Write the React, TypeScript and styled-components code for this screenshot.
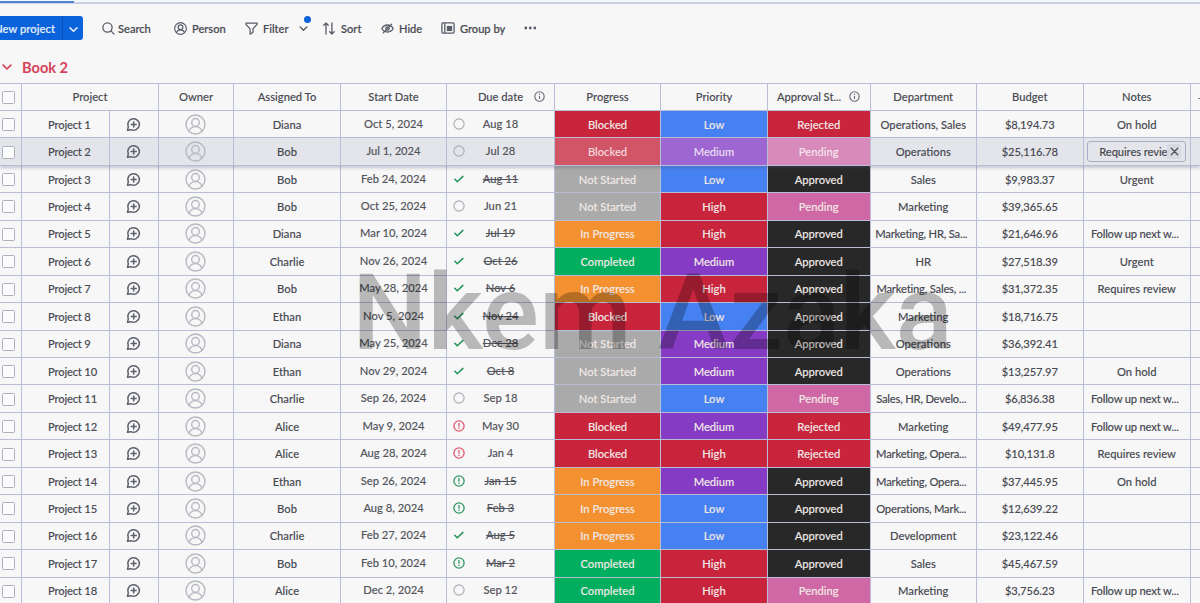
import React from 'react';
import styled, { createGlobalStyle } from 'styled-components';

const GlobalStyle = createGlobalStyle`
  * { box-sizing: border-box; }
  html, body { margin: 0; padding: 0; overflow: hidden; }
  body {
    background: #f7f7f7;
    color: #484a52;
    font-family: Lato, "Open Sans", sans-serif;
    font-size: 11.2px;
    font-weight: 500;
  }
`;

const LINE = '#b9bdd8';

const Page = styled.div`
  position: relative;
  width: 1200px;
  height: 603px;
  overflow: hidden;
  display: flex;
  flex-direction: column;
`;

const TabStrip = styled.div`
  height: 4px;
  flex: none;
  background: #f3f6fd;
  border-bottom: 2px solid #cdd1e3;
`;

const ActiveTab = styled.div`
  width: 74px;
  height: 3px;
  background: linear-gradient(#f3f6fd 0 1px, #4d86d3 1px);
`;

const Toolbar = styled.div`
  display: flex;
  flex: none;
  height: 48px;
  align-items: center;
  font-size: 11.1px;
  -webkit-text-stroke: 0.2px currentColor;
`;

const NewButton = styled.div`
  display: flex;
  width: 83px;
  height: 24px;
  margin-right: 19px;
  border-radius: 0 3px 3px 0;
  background: #0a63da;
  color: #e6effb;
  overflow: hidden;
`;

const NewLabel = styled.div`
  display: flex;
  width: 63px;
  align-items: center;
  justify-content: flex-end;
  padding-right: 7px;
  border-right: 1px solid #0853b8;
  white-space: nowrap;
  letter-spacing: 0.1px;
`;

const NewCaret = styled.div`
  display: flex;
  flex: 1;
  align-items: center;
  justify-content: center;
  padding-top: 2px;
`;

const Tool = styled.div<{ $width: number; $gap: number }>`
  position: relative;
  display: flex;
  width: ${p => p.$width}px;
  gap: ${p => p.$gap}px;
  align-items: center;
  white-space: nowrap;
  svg { flex: none; }
`;

const FilterDot = styled.span`
  position: absolute;
  top: -6px;
  left: 59px;
  width: 7px;
  height: 7px;
  border-radius: 50%;
  background: #0b63d6;
`;

const FilterCaret = styled.span`
  display: flex;
  margin-left: 5px;
`;

const GroupTitle = styled.div`
  display: flex;
  flex: none;
  height: 31px;
  align-items: center;
  padding: 0 0 1px 2px;
  gap: 10px;
  color: #d6435a;
  font-size: 14.6px;
  font-weight: 700;
`;

const Table = styled.div`
  flex: none;
  border-top: 1px solid ${LINE};
  -webkit-text-stroke: 0.1px currentColor;
`;

const Row = styled.div<{ $head?: boolean; $hover?: boolean }>`
  position: relative;
  z-index: ${p => (p.$hover ? 1 : 0)};
  display: grid;
  grid-template-columns: ${p =>
    p.$head
      ? '22px 137px 75px 107px 106px 108px 106px 107px 102.5px 106.5px 106.5px 107.5px 1fr'
      : '22px 88px 49px 75px 107px 106px 108px 106px 107px 102.5px 106.5px 106.5px 107.5px 1fr'};
  height: ${p => (p.$head ? 26.9 : 27.46)}px;
  background: ${p => (p.$hover ? '#e4e5ea' : 'transparent')};
  box-shadow: ${p => (p.$hover ? '0 2px 3px rgba(80, 86, 120, 0.3)' : 'none')};
`;

const Cell = styled.div<{ $lift?: boolean; $clipped?: boolean }>`
  display: flex;
  align-items: center;
  justify-content: center;
  min-width: 0;
  padding-bottom: ${p => (p.$lift ? 2 : 0)}px;
  padding-right: ${p => (p.$clipped ? 4 : 0)}px;
  letter-spacing: ${p => (p.$clipped ? -0.2 : 0)}px;
  border-right: 1px solid ${LINE};
  border-bottom: 1px solid ${LINE};
  white-space: nowrap;
`;

const HeadCell = styled(Cell)`
  padding-top: 0;
`;

const AvatarCell = styled(Cell)`
  padding-right: 2px;
`;

const BudgetCell = styled(Cell)`
  font-size: 11.2px;
  letter-spacing: -0.1px;
`;

const CheckCell = styled(Cell)`
  justify-content: flex-start;
  padding: 1px 0 0 2px;
`;

const NameCell = styled(Cell)`
  justify-content: flex-start;
  padding-left: 26px;
  letter-spacing: -0.18px;
`;

const StatusCell = styled(Cell)<{ $fill: string; $dim: boolean }>`
  background: ${p => p.$fill};
  color: ${p => (p.$dim ? 'rgba(255,255,255,0.78)' : '#f1e9e6')};
`;

const SplitCell = styled(Cell)<{ $head?: boolean }>`
  display: grid;
  grid-template-columns: 23px 61px 16px;
  justify-items: center;
  justify-content: start;
  padding-bottom: ${p => (p.$head ? 0 : 1)}px;
`;

const DateText = styled.span<{ $struck?: boolean }>`
  text-decoration: ${p => (p.$struck ? 'line-through' : 'none')};
  color: #53555c;
`;

const DueText = styled(DateText)`
  padding-bottom: 1px;
`;

const ApprovalHead = styled(HeadCell)`
  justify-content: flex-start;
  padding-left: 9px;
  gap: 8px;
  letter-spacing: -0.05px;
`;

const EndCell = styled.div`
  border-bottom: 1px solid ${LINE};
  color: #5d6070;
  padding: 7px 0 0 7px;
`;

const Box = styled.span`
  width: 13px;
  height: 13px;
  border: 1px solid #adb0c0;
  border-radius: 1.5px;
  background: #fbfbfc;
`;

const NoteChip = styled.div`
  position: relative;
  display: flex;
  align-items: center;
  width: 99px;
  height: 21px;
  padding-left: 11px;
  border: 1px solid #a9adc6;
  border-radius: 3px;
  overflow: hidden;
  letter-spacing: -0.1px;
`;

const ChipClose = styled.span`
  position: absolute;
  right: 4px;
  top: 2px;
  display: flex;
  width: 14px;
  height: 15px;
  align-items: center;
  justify-content: center;
  border-radius: 2px;
  background: #d8dae2;
`;

const Watermark = styled.div`
  position: absolute;
  z-index: 5;
  left: 352px;
  top: 253px;
  color: #000;
  opacity: 0.25;
  font-family: Roboto, "Liberation Sans", sans-serif;
  font-size: 106.4px;
  font-weight: 500;
  line-height: 120px;
  white-space: nowrap;
  pointer-events: none;
`;

const Chevron = ({ color = '#50535e', size = 9, width = 1.5 }: { color?: string; size?: number; width?: number }) => (
  <svg width={size} height={size} viewBox="0 0 10 10" fill="none" stroke={color} strokeWidth={width} strokeLinecap="round" strokeLinejoin="round">
    <path d="M1.2 3.2 5 7l3.8-3.8" />
  </svg>
);

const PersonGlyph = ({ size, color, width }: { size: number; color: string; width: number }) => (
  <svg width={size} height={size} viewBox="0 0 22 22" fill="none" stroke={color} strokeWidth={width}>
    <circle cx="11" cy="11" r="9.9" />
    <circle cx="11" cy="8.8" r="4" />
    <path d="M4.2 18c1.2-3.2 3.6-4.8 6.8-4.8s5.600 1.600 6.800 4.800" />
  </svg>
);

const SearchGlyph = () => (
  <svg width="13" height="13" viewBox="0 0 13 13" fill="none" stroke="#5a5d68" strokeWidth="1.3" strokeLinecap="round">
    <circle cx="5.5" cy="5.5" r="4.6" />
    <path d="m8.900 8.900 3.200 3.200" />
  </svg>
);

const FilterGlyph = () => (
  <svg width="13" height="13" viewBox="0 0 13 13" fill="none" stroke="#5a5d68" strokeWidth="1.25" strokeLinejoin="round">
    <path d="M.9 1h11.200v1.300L8 6.900v3.300l-2.900 2V6.900L.9 2.300z" />
  </svg>
);

const SortGlyph = () => (
  <svg width="12" height="13" viewBox="0 0 12 13" fill="none" stroke="#5a5d68" strokeWidth="1.3" strokeLinecap="round" strokeLinejoin="round">
    <path d="M3 12V1M.8 3.200 3 1l2.200 2.200M8.900 1v11M6.700 9.800 8.900 12l2.200-2.200" />
  </svg>
);

const HideGlyph = () => (
  <svg width="13" height="11" viewBox="0 0 13 11" fill="none" stroke="#5a5d68" strokeWidth="1.3" strokeLinecap="round">
    <path d="M.8 5.500C2 3.300 4 2 6.500 2s4.500 1.300 5.700 3.500C11 7.700 9 9 6.500 9S2 7.700.8 5.500z" />
    <circle cx="6.500" cy="5.500" r="1.700" />
    <path d="M2.300 9.900 10.700 1.100" />
  </svg>
);

const GroupGlyph = () => (
  <svg width="14" height="12" viewBox="0 0 14 12" fill="none" stroke="#5a5d68" strokeWidth="1.300">
    <rect x=".9" y=".9" width="12.200" height="10.200" rx="1" />
    <path d="M3.800 1v10" />
    <rect x="6.500" y="4.600" width="4" height="3.800" fill="#5a5d68" />
  </svg>
);

const ChatGlyph = () => (
  <svg width="15" height="15" viewBox="0 0 15 15" fill="none" stroke="#5d606c" strokeWidth="1.500" strokeLinecap="round" strokeLinejoin="round">
    <path d="M2.300 9.900A5.800 5.800 0 1 1 5 12.700L1.500 13.300z" />
    <path d="M7.700 4.900v5M5.200 7.400h5" />
  </svg>
);

const InfoGlyph = () => (
  <svg width="11" height="11" viewBox="0 0 11 11" fill="none" stroke="#696c78" strokeWidth="1.100">
    <circle cx="5.500" cy="5.500" r="4.700" />
    <path d="M5.500 4.900v3M5.500 2.800v1.100" />
  </svg>
);

type Mark = 'open' | 'done' | 'late' | 'lateDone';

const DueMark = ({ kind }: { kind: Mark }) => {
  if (kind === 'done') {
    return (
      <svg width="12" height="12" viewBox="0 0 12 12" fill="none" stroke="#23935a" strokeWidth="1.500" strokeLinecap="round" strokeLinejoin="round">
        <path d="m1.800 6.300 2.500 2.500 5.600-5.400" />
      </svg>
    );
  }
  const color = kind === 'open' ? '#a9abb5' : kind === 'late' ? '#e0586a' : '#2f9862';
  return (
    <svg width="12" height="12" viewBox="0 0 12 12" fill="none" stroke={color} strokeWidth={kind === 'open' ? 1.1 : 1.3}>
      <circle cx="6" cy="6" r="5.100" />
      {kind !== 'open' && <path d="M6 3v3.700M6 7.700V9" />}
    </svg>
  );
};

const FILLS: Record<string, [string, string]> = {
  Blocked: ['#c8253d', '#d25467'],
  'Not Started': ['#aaaaaa', '#bbbbbb'],
  'In Progress': ['#f39130', '#f5a95c'],
  Completed: ['#02af5f', '#3cc083'],
  Low: ['#4681f2', '#6b9af4'],
  Medium: ['#853bc3', '#9e66d0'],
  High: ['#c8253d', '#d25467'],
  Rejected: ['#c8253d', '#d25467'],
  Pending: ['#cf68a4', '#d88bba'],
  Approved: ['#282828', '#545454'],
};

type Item = [string, string, Mark, string, string, string, string, string, string, string];

const ITEMS: Item[] = [
  ['Diana', 'Oct 5, 2024', 'open', 'Aug 18', 'Blocked', 'Low', 'Rejected', 'Operations, Sales', '$8,194.73', 'On hold'],
  ['Bob', 'Jul 1, 2024', 'open', 'Jul 28', 'Blocked', 'Medium', 'Pending', 'Operations', '$25,116.78', 'Requires review'],
  ['Bob', 'Feb 24, 2024', 'done', 'Aug 11', 'Not Started', 'Low', 'Approved', 'Sales', '$9,983.37', 'Urgent'],
  ['Bob', 'Oct 25, 2024', 'open', 'Jun 21', 'Not Started', 'High', 'Pending', 'Marketing', '$39,365.65', ''],
  ['Diana', 'Mar 10, 2024', 'done', 'Jul 19', 'In Progress', 'High', 'Approved', 'Marketing, HR, Sa...', '$21,646.96', 'Follow up next w...'],
  ['Charlie', 'Nov 26, 2024', 'done', 'Oct 26', 'Completed', 'Medium', 'Approved', 'HR', '$27,518.39', 'Urgent'],
  ['Bob', 'May 28, 2024', 'done', 'Nov 6', 'In Progress', 'High', 'Approved', 'Marketing, Sales, ...', '$31,372.35', 'Requires review'],
  ['Ethan', 'Nov 5, 2024', 'done', 'Nov 24', 'Blocked', 'Low', 'Approved', 'Marketing', '$18,716.75', ''],
  ['Diana', 'May 25, 2024', 'done', 'Dec 28', 'Not Started', 'Medium', 'Approved', 'Operations', '$36,392.41', ''],
  ['Ethan', 'Nov 29, 2024', 'done', 'Oct 8', 'Not Started', 'Medium', 'Approved', 'Operations', '$13,257.97', 'On hold'],
  ['Charlie', 'Sep 26, 2024', 'open', 'Sep 18', 'Not Started', 'Low', 'Pending', 'Sales, HR, Develo...', '$6,836.38', 'Follow up next w...'],
  ['Alice', 'May 9, 2024', 'late', 'May 30', 'Blocked', 'Medium', 'Rejected', 'Marketing', '$49,477.95', 'Follow up next w...'],
  ['Alice', 'Aug 28, 2024', 'late', 'Jan 4', 'Blocked', 'High', 'Rejected', 'Marketing, Opera...', '$10,131.8', 'Requires review'],
  ['Ethan', 'Sep 26, 2024', 'lateDone', 'Jan 15', 'In Progress', 'Medium', 'Approved', 'Marketing, Opera...', '$37,445.95', 'On hold'],
  ['Bob', 'Aug 8, 2024', 'lateDone', 'Feb 3', 'In Progress', 'Low', 'Approved', 'Operations, Mark...', '$12,639.22', ''],
  ['Charlie', 'Feb 27, 2024', 'done', 'Aug 5', 'In Progress', 'Low', 'Approved', 'Development', '$23,122.46', ''],
  ['Bob', 'Feb 10, 2024', 'lateDone', 'Mar 2', 'Completed', 'High', 'Approved', 'Sales', '$45,467.59', ''],
  ['Alice', 'Dec 2, 2024', 'open', 'Sep 12', 'Completed', 'High', 'Pending', 'Marketing', '$3,756.23', 'Follow up next w...'],
];

const isClipped = (text: string) => text.endsWith('...');

const ItemRow = ({ item, index }: { item: Item; index: number }) => {
  const [person, start, mark, due, progress, priority, approval, department, budget, note] = item;
  const hover = index === 1;
  const struck = mark === 'done' || mark === 'lateDone';
  return (
    <Row $hover={hover}>
      <CheckCell><Box /></CheckCell>
      <NameCell>{`Project ${index + 1}`}</NameCell>
      <AvatarCell><ChatGlyph /></AvatarCell>
      <AvatarCell><PersonGlyph size={21} color="#b8bac2" width={1.5} /></AvatarCell>
      <Cell>{person}</Cell>
      <Cell $lift><DateText>{start}</DateText></Cell>
      <SplitCell>
        <DueMark kind={mark} />
        <DueText $struck={struck}>{due}</DueText>
      </SplitCell>
      {[progress, priority, approval].map(value => (
        <StatusCell key={value} $fill={FILLS[value][hover ? 1 : 0]} $dim={hover}>{value}</StatusCell>
      ))}
      <Cell $clipped={isClipped(department)}>{department}</Cell>
      <BudgetCell>{budget}</BudgetCell>
      <Cell $clipped={isClipped(note)}>
        {hover ? (
          <NoteChip>
            {note}
            <ChipClose>
              <svg width="9" height="9" viewBox="0 0 9 9" stroke="#4c4f5a" strokeWidth="1.300" strokeLinecap="round">
                <path d="m1.300 1.300 6.400 6.400M7.700 1.300 1.300 7.700" />
              </svg>
            </ChipClose>
          </NoteChip>
        ) : note}
      </Cell>
      <EndCell />
    </Row>
  );
};

export default function App() {
  return (
    <>
      <GlobalStyle />
      <Page>
        <TabStrip><ActiveTab /></TabStrip>
        <Toolbar>
          <NewButton>
            <NewLabel>New project</NewLabel>
            <NewCaret><Chevron color="#e6effb" width={1.7} /></NewCaret>
          </NewButton>
          <Tool $width={72} $gap={3}><SearchGlyph />Search</Tool>
          <Tool $width={71} $gap={5}><PersonGlyph size={13} color="#5a5d68" width={2} />Person</Tool>
          <Tool $width={78} $gap={5}>
            <FilterGlyph />Filter
            <FilterCaret><Chevron /></FilterCaret>
            <FilterDot />
          </Tool>
          <Tool $width={58} $gap={6}><SortGlyph />Sort</Tool>
          <Tool $width={60} $gap={5}><HideGlyph />Hide</Tool>
          <Tool $width={83} $gap={5}><GroupGlyph />Group by</Tool>
          <Tool $width={14} $gap={0}>
            <svg width="13" height="4" viewBox="0 0 13 4" fill="#5a5d68">
              <circle cx="1.800" cy="2" r="1.400" />
              <circle cx="6.300" cy="2" r="1.400" />
              <circle cx="10.800" cy="2" r="1.400" />
            </svg>
          </Tool>
        </Toolbar>
        <GroupTitle><Chevron color="#d6435a" size={10} width={1.7} />Book 2</GroupTitle>
        <Table>
          <Row $head>
            <CheckCell><Box /></CheckCell>
            <HeadCell>Project</HeadCell>
            <HeadCell>Owner</HeadCell>
            <HeadCell>Assigned To</HeadCell>
            <HeadCell>Start Date</HeadCell>
            <SplitCell $head><span /><span>Due date</span><InfoGlyph /></SplitCell>
            <HeadCell>Progress</HeadCell>
            <HeadCell>Priority</HeadCell>
            <ApprovalHead>Approval St...<InfoGlyph /></ApprovalHead>
            <HeadCell>Department</HeadCell>
            <HeadCell>Budget</HeadCell>
            <HeadCell>Notes</HeadCell>
            <EndCell>+</EndCell>
          </Row>
          {ITEMS.map((item, index) => <ItemRow key={index} item={item} index={index} />)}
        </Table>
        <Watermark>Nkem Azaka</Watermark>
      </Page>
    </>
  );
}
